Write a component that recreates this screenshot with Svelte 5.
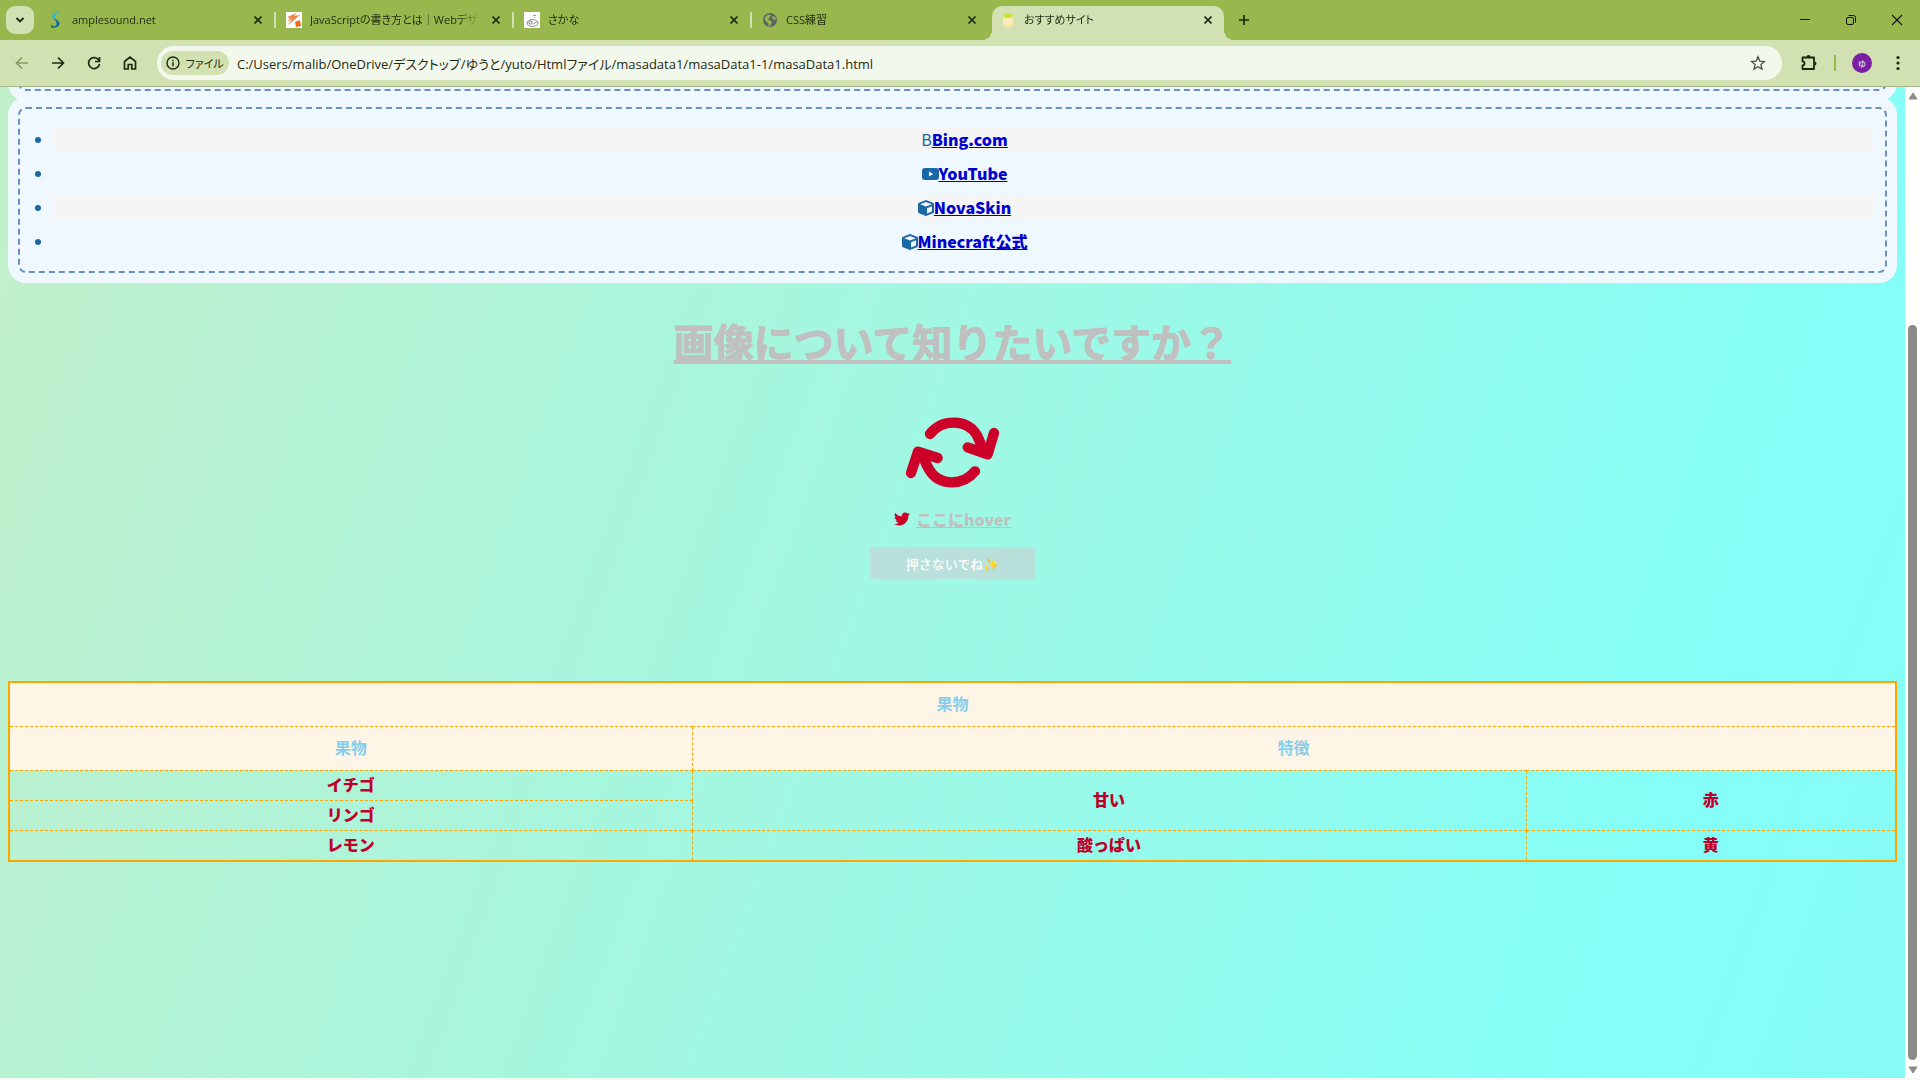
<script>
    let tabs = [
        { title: "amplesound.net", icon: "sound", active: false },
        { title: "JavaScriptの書き方とは｜Webデザ", icon: "web", active: false },
        { title: "さかな", icon: "fish", active: false },
        { title: "CSS練習", icon: "globe", active: false },
        { title: "おすすめサイト", icon: "cup", active: true },
    ];

    let url =
        "C:/Users/malib/OneDrive/デスクトップ/ゆうと/yuto/Htmlファイル/masadata1/masaData1-1/masaData1.html";

    let sites = [
        { name: "Bing.com", icon: "b", href: "https://www.bing.com" },
        { name: "YouTube", icon: "youtube", href: "https://www.youtube.com" },
        { name: "NovaSkin", icon: "cube", href: "https://minecraft.novaskin.me" },
        { name: "Minecraft公式", icon: "cube", href: "https://www.minecraft.net" },
    ];
</script>

<div class="window">
    <header class="tabstrip">
        <button class="tabsearch" aria-label="タブを検索">
            <svg width="10" height="10" viewBox="0 0 10 10"><path d="M1.500 3l3.500 3.500L8.500 3" fill="none" stroke="#1b2410" stroke-width="1.800" /></svg>
        </button>
        <div class="tabs">
            {#each tabs as tab}
                <div class="tab" class:active={tab.active}>
                    <svg class="favicon" viewBox="0 0 16 16">
                        {#if tab.icon === "sound"}
                            <path d="M13 0Q4 0 4 4Q4 7 9 8Q6.500 5.500 7.500 3.500Q8.500 1 13 0z" fill="#35b6c9" />
                            <path d="M5.500 6.500Q12 8.500 11.500 12Q11 16 3 16Q8 14.500 8.500 12Q9 9.500 5.500 6.500z" fill="#136f98" />
                            <path d="M3 13l4 1.500L3 16z" fill="#136f98" />
                        {:else if tab.icon === "web"}
                            <rect width="16" height="16" fill="#fff" />
                            <path d="M1 5L11 1L8 4l6-1L2 13l4-6-5 3 3-4z" fill="#f0824a" />
                            <path d="M9 10l5-2 1 6-5 1z" fill="#ee6a1f" />
                        {:else if tab.icon === "fish"}
                            <rect width="16" height="16" fill="#fff" />
                            <ellipse cx="8.500" cy="11" rx="5.500" ry="3.500" fill="none" stroke="#888" />
                            <circle cx="6.500" cy="10.500" r="1.600" fill="none" stroke="#777" />
                            <path d="M9 12.500l4-3M9 3.500h3M10 5.500h1" stroke="#999" fill="none" />
                        {:else if tab.icon === "globe"}
                            <circle cx="8" cy="8" r="7" fill="#5f6368" />
                            <path d="M3 6Q4.500 2.500 8 2.500L9 4 7 5v1.500L5.500 8l3 .5 1.500 2-1 1.500-1 2H6.500V11.500L2.500 8zM11 4l2.500 1.500.5 2.500-2-.5-2-1.500z" fill="#98b84e" />
                        {:else}
                            <path d="M3 3.500h10v10c0 2.500-10 2.500-10 0z" fill="#f7e8a9" />
                            <ellipse cx="8" cy="3.500" rx="5" ry="2.500" fill="#c5e53c" />
                            <path d="M4 8h8M4 11h8" stroke="#fff3cf" />
                        {/if}
                    </svg>
                    <button class="title">{tab.title}</button>
                    <button class="close" aria-label="閉じる">
                        <svg width="10" height="10" viewBox="0 0 10 10"><path d="M1.500 1.500l7 7M8.500 1.500l-7 7" stroke="#1b2410" stroke-width="1.700" /></svg>
                    </button>
                </div>
            {/each}
        </div>
        <button class="newtab" aria-label="新しいタブ">
            <svg width="12" height="12" viewBox="0 0 12 12"><path d="M6 1v10M1 6h10" stroke="#1b2410" stroke-width="1.600" /></svg>
        </button>
        <div class="controls">
            <button aria-label="最小化"><svg width="12" height="12" viewBox="0 0 12 12"><path d="M1 5.500h10" stroke="#111" /></svg></button>
            <button aria-label="元に戻す"><svg width="12" height="12" viewBox="0 0 12 12" fill="none" stroke="#111"><rect x="1.500" y="3.500" width="7" height="7" rx="1.500" /><path d="M3.500 1.500h5a2 2 0 0 1 2 2v5" /></svg></button>
            <button aria-label="ウィンドウを閉じる"><svg width="12" height="12" viewBox="0 0 12 12"><path d="M1 1l10 10M11 1L1 11" stroke="#111" stroke-width="1.100" /></svg></button>
        </div>
    </header>

    <nav class="toolbar">
        <div class="navs">
            <button aria-label="戻る"><svg width="16" height="16" viewBox="0 0 16 16" fill="none" stroke="#8a9a63" stroke-width="1.700"><path d="M14 8H3M8 2.500L2.500 8 8 13.500" /></svg></button>
            <button aria-label="進む"><svg width="16" height="16" viewBox="0 0 16 16" fill="none" stroke="#1f2a10" stroke-width="1.700"><path d="M2 8h11M8 2.500L13.500 8 8 13.500" /></svg></button>
            <button aria-label="再読み込み"><svg width="16" height="16" viewBox="0 0 16 16" fill="none" stroke="#1f2a10" stroke-width="1.700"><path d="M13.500 9A5.500 5.500 0 1 1 12 4.200L13.500 6M13.500 2v4.500H9" /></svg></button>
            <button aria-label="ホーム"><svg width="16" height="16" viewBox="0 0 16 16" fill="none" stroke="#1f2a10" stroke-width="1.700"><path d="M2.500 6.500L8 2l5.500 4.500V14h-3.700V9.500H6.200V14H2.500z" /></svg></button>
        </div>
        <div class="omnibox">
            <button class="chip">
                <svg width="14" height="14" viewBox="0 0 14 14"><circle cx="7" cy="7" r="6" fill="none" stroke="#1f2a10" stroke-width="1.400" /><path d="M7 6.200V10.200M7 3.700v1.500" stroke="#1f2a10" stroke-width="1.500" /></svg>
                ファイル
            </button>
            <input class="url" type="text" aria-label="アドレス" value={url} />
            <button class="star" aria-label="ブックマーク">
                <svg width="16" height="16" viewBox="0 0 16 16"><path d="M8 1.800l1.800 4.300 4.700.4-3.600 3 1.100 4.600L8 11.700l-4 2.400 1.100-4.600-3.600-3 4.700-.4z" fill="none" stroke="#4b5044" stroke-width="1.300" /></svg>
            </button>
        </div>
        <div class="tools">
            <button aria-label="拡張機能">
                <svg width="18" height="18" viewBox="0 0 18 18"><path d="M2.500 3.500h11.500v11.500H2.500v-3.700c2.700 0 2.700-4 0-4z" fill="none" stroke="#1b2410" stroke-width="1.800" stroke-linejoin="round" /><path d="M6.500 3a2 2 0 0 1 4 0zM14.500 7.500a2 2 0 0 1 0 4z" fill="#1b2410" /></svg>
            </button>
            <span class="divider"></span>
            <button class="avatar">ゆ</button>
            <button aria-label="メニュー">
                <svg width="4" height="16" viewBox="0 0 4 16" fill="#1b2410"><circle cx="2" cy="2.500" r="1.600" /><circle cx="2" cy="8" r="1.600" /><circle cx="2" cy="13.500" r="1.600" /></svg>
            </button>
        </div>
    </nav>

    <div class="view">
        <main class="page">
            <div class="box upper"></div>
            <ul class="box">
                {#each sites as site}
                    <li>
                        {#if site.icon === "b"}
                            <span class="b">B</span>
                        {:else if site.icon === "youtube"}
                            <svg width="17" height="16" viewBox="0 0 17 16"><path fill-rule="evenodd" d="M3 2h11q3 0 3 3v6q0 3-3 3H3q-3 0-3-3V5q0-3 3-3zM7 5.500v5L11.200 8z" /></svg>
                        {:else}
                            <svg width="16" height="16" viewBox="0 0 16 16"><path fill-rule="evenodd" d="M8 0l7 2.700q1 .4 1 1.300v8q0 .9-1 1.300L8 16l-7-2.700q-1-.4-1-1.300V4q0-.9 1-1.300zM8 2.100L2.200 4.300 8 6.600l5.800-2.300zM9 8.300v5.200l5-2V6.300z" /></svg>
                        {/if}<a href={site.href}>{site.name}</a>
                    </li>
                {/each}
            </ul>

            <h1><a href="#image">画像について知りたいですか？</a></h1>

            <svg class="rotate" width="100" height="76" viewBox="130 45 300 228" fill="none" stroke="#cc0029" stroke-width="31" stroke-linecap="round" stroke-linejoin="round">
                <path d="M211 102C248 56 322 56 352 106Q362 126 368 146" />
                <path d="M403 99L384 163 324 142" />
                <path d="M346 214C308 260 236 258 208 208Q198 192 191 170" />
                <path d="M154 219L175 155 234 174" />
            </svg>

            <p class="hover">
                <svg width="16" height="16" viewBox="0 0 512 512"><path d="M459.370 151.716c.325 4.548.325 9.097.325 13.645 0 138.720-105.583 298.558-298.558 298.558-59.452 0-114.680-17.219-161.137-47.106 8.447.974 16.568 1.299 25.340 1.299 49.055 0 94.213-16.568 130.274-44.832-46.132-.975-84.792-31.188-98.112-72.772 6.498.974 12.995 1.624 19.818 1.624 9.421 0 18.843-1.300 27.614-3.573-48.081-9.747-84.143-51.980-84.143-102.985v-1.299c13.969 7.797 30.214 12.670 47.431 13.319-28.264-18.843-46.781-51.005-46.781-87.391 0-19.492 5.197-37.360 14.294-52.954 51.655 63.675 129.300 105.258 216.365 109.807-1.624-7.797-2.599-15.918-2.599-24.040 0-57.828 46.782-104.934 104.934-104.934 30.213 0 57.502 12.670 76.670 33.137 23.715-4.548 46.456-13.320 66.599-25.340-7.798 24.366-24.366 44.833-46.132 57.827 21.117-2.273 41.584-8.122 60.426-16.243-14.292 20.791-32.161 39.308-52.628 54.253z" /></svg>
                <a href="#hover">ここにhover</a>
            </p>

            <button class="push">押さないでね✨</button>

            <table>
                <colgroup>
                    <col class="name" />
                    <col class="taste" />
                    <col />
                </colgroup>
                <thead>
                    <tr><th colspan="3">果物</th></tr>
                    <tr><th>果物</th><th colspan="2">特徴</th></tr>
                </thead>
                <tbody>
                    <tr><td>イチゴ</td><td rowspan="2">甘い</td><td rowspan="2">赤</td></tr>
                    <tr><td>リンゴ</td></tr>
                    <tr><td>レモン</td><td>酸っぱい</td><td>黄</td></tr>
                </tbody>
            </table>
        </main>
        <div class="scrollbar">
            <svg width="10" height="8" viewBox="0 0 10 8"><path d="M5 1l4 6H1z" fill="#8b8b8b" stroke="#8b8b8b" stroke-linejoin="round" /></svg>
            <div class="track"><div class="thumb"></div></div>
            <svg width="10" height="8" viewBox="0 0 10 8"><path d="M5 7l4-6H1z" fill="#8b8b8b" stroke="#8b8b8b" stroke-linejoin="round" /></svg>
        </div>
    </div>
</div>

<style>
    :global(body) {
        margin: 0;
    }

    * {
        box-sizing: border-box;
    }

    button {
        border: 0;
        padding: 0;
        background: none;
        font: inherit;
        color: inherit;
        display: flex;
        align-items: center;
        justify-content: center;
    }

    .window {
        display: flex;
        flex-direction: column;
        height: 100vh;
        overflow: hidden;
        font-family: "Open Sans", "Noto Sans CJK JP", sans-serif;
        color: #1f2a10;
    }

    /* タブバー */
    .tabstrip {
        display: flex;
        align-items: center;
        height: 40px;
        padding-left: 6px;
        background: #98b84e;
    }

    .tabsearch {
        width: 28px;
        height: 28px;
        border-radius: 9px;
        background: #d2e1b2;
    }

    .tabs {
        display: flex;
        align-self: stretch;
        align-items: flex-end;
        padding-left: 4px;
    }

    .tab {
        position: relative;
        display: flex;
        align-items: center;
        width: 238px;
        height: 34px;
        padding: 0 13px 6px 10px;
        font-size: 11px;
        font-feature-settings: "palt";
    }

    .tab:nth-child(-n + 3)::after {
        content: "";
        position: absolute;
        right: 0;
        top: 6px;
        width: 2px;
        height: 16px;
        background: #d2e1b2;
    }

    .tab.active {
        width: 232px;
        margin-left: 2px;
        padding: 0 11px 6px 8px;
        border-radius: 10px 10px 0 0;
        background: #d2e1b2;
    }

    .tab.active::before,
    .tab.active::after {
        content: "";
        position: absolute;
        bottom: 0;
        width: 10px;
        height: 10px;
    }

    .tab.active::before {
        left: -10px;
        background: radial-gradient(circle at 0 0, #98b84e 10px, #d2e1b2 10px);
    }

    .tab.active::after {
        right: -10px;
        background: radial-gradient(circle at 100% 0, #98b84e 10px, #d2e1b2 10px);
    }

    .favicon {
        width: 16px;
        height: 16px;
        margin-right: 8px;
        flex: none;
    }

    .title {
        flex: 1;
        justify-content: flex-start;
        overflow: hidden;
        white-space: nowrap;
        margin-right: 12px;
        line-height: 20px;
        mask-image: linear-gradient(90deg, #000 88%, transparent);
    }

    .newtab {
        width: 28px;
        height: 28px;
        margin-left: 6px;
    }

    .controls {
        display: flex;
        margin-left: auto;
    }

    .controls button {
        width: 46px;
        height: 40px;
    }

    /* ツールバー */
    .toolbar {
        display: flex;
        align-items: center;
        height: 47px;
        background: #d2e1b2;
        border-bottom: 1px solid #a3b58c;
    }

    .navs {
        display: flex;
        padding: 0 9px 0 4px;
    }

    .navs button {
        width: 36px;
        height: 34px;
    }

    .omnibox {
        flex: 1;
        display: flex;
        align-items: center;
        height: 34px;
        padding: 0 16px 0 4px;
        border-radius: 17px;
        background: #f3f8ec;
    }

    .chip {
        gap: 5px;
        width: 68px;
        height: 24px;
        border-radius: 12px;
        background: #d2e1b2;
        font-size: 11px;
        font-feature-settings: "palt";
    }

    .url {
        flex: 1;
        min-width: 0;
        margin-left: 8px;
        padding: 0;
        border: 0;
        outline: 0;
        background: none;
        font-family: inherit;
        font-size: 13px;
        font-feature-settings: "palt";
        color: #1f2a10;
    }

    .tools {
        display: flex;
        align-items: center;
        padding: 0 20px 0 18px;
    }

    .divider {
        width: 2px;
        height: 16px;
        margin: 0 16px;
        background: #98b84e;
    }

    .avatar {
        width: 20px;
        height: 20px;
        margin-right: 24px;
        border-radius: 50%;
        background: #7b1fa2;
        color: #fff;
        font-size: 8px;
    }

    /* ページ本体 */
    .view {
        flex: 1;
        display: flex;
        min-height: 0;
        border-bottom: 2px solid #f6f8f4;
    }

    .page {
        flex: 1;
        display: flex;
        flex-direction: column;
        align-items: center;
        padding: 0 8px;
        overflow: hidden;
        background: linear-gradient(110deg, #c2efca, #84fff8 86%, #88faf5);
        font-family: "Noto Sans CJK JP", sans-serif;
        font-size: 16px;
        font-weight: 900;
    }

    .box {
        align-self: stretch;
        margin: 0 10px 16px;
        padding: 13px 12px 13px 34px;
        border: 2px dashed #6b8fc0;
        border-radius: 8px;
        background: aliceblue;
        box-shadow: 0 0 0 10px aliceblue;
        color: #1a68a6;
    }

    .upper {
        flex: none;
        height: 40px;
        margin-top: -36px;
    }

    li {
        height: 24px;
        margin: 5px 0 10px;
        padding-left: 2px;
        line-height: 24px;
        text-align: center;
    }

    li:last-child {
        margin-bottom: 5px;
    }

    li:nth-child(odd) {
        background: whitesmoke;
    }

    li svg {
        vertical-align: -2px;
        fill: currentColor;
    }

    li a {
        color: #0000cc;
    }

    .b {
        font-weight: 400;
    }

    h1 {
        margin: 22px 0 0;
        font-size: 40px;
        line-height: 60px;
    }

    h1 a,
    .hover a {
        color: silver;
    }

    h1 a {
        -webkit-text-stroke: 1px silver;
    }

    .rotate {
        flex: none;
        margin-top: 44px;
    }

    .hover {
        display: flex;
        align-items: center;
        gap: 6px;
        margin: 16px 0;
        line-height: 24px;
    }

    .hover svg {
        fill: #cc0029;
    }

    .push {
        width: 165px;
        height: 32px;
        border-radius: 2px;
        background: #b9e0da;
        color: #fff;
        font-size: 13px;
        font-weight: 500;
    }

    table {
        width: 100%;
        margin-top: 102px;
        border: 2px solid orange;
        border-collapse: collapse;
        table-layout: fixed;
        text-align: center;
    }

    .name {
        width: 36.2%;
    }

    .taste {
        width: 44.2%;
    }

    th,
    td {
        height: 30px;
        padding: 0 0 2px;
        border: 1px dashed orange;
        line-height: 24px;
        color: #bf002a;
    }

    tr:last-child td {
        height: 31px;
    }

    th {
        height: 44px;
        background: #fff5e6;
        color: skyblue;
    }

    /* スクロールバー */
    .scrollbar {
        display: flex;
        flex-direction: column;
        align-items: center;
        width: 15px;
        padding: 5px 0 4px;
        background: #fff;
    }

    .track {
        flex: 1;
        display: flex;
        align-items: flex-end;
        padding: 6px 0;
    }

    .thumb {
        width: 9px;
        height: 77%;
        border-radius: 5px;
        background: #8b8b8b;
    }
</style>
